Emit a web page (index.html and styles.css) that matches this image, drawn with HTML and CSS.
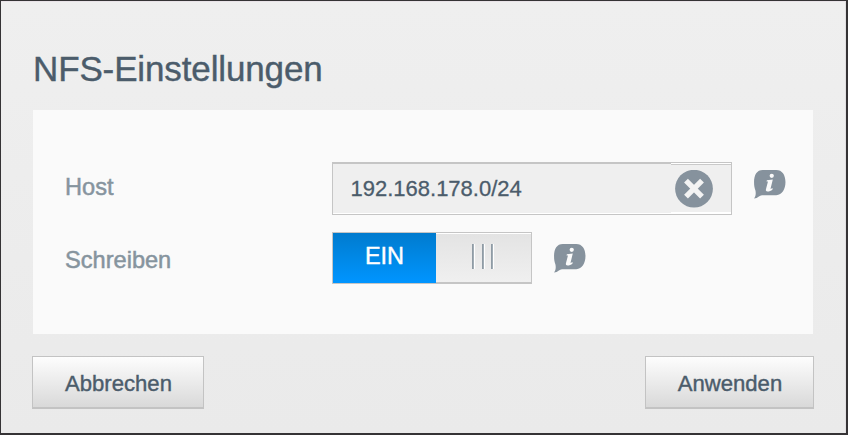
FILE: index.html
```html
<!DOCTYPE html>
<html lang="de">
<head>
<meta charset="utf-8">
<title>NFS-Einstellungen</title>
<link rel="stylesheet" href="styles.css">
</head>
<body>
<svg class="defs" width="0" height="0">
  <symbol id="info" viewBox="0 0 33 30">
    <path fill="#86929d" d="M9 0H23C29 0 32.500 5 32.500 12.500S29 26 23 26H10C7.500 26 6.500 26.300 5 27.500C3.500 28.800 2 29.500 0 29.500C1.800 27 2 24.500 1.500 21.500C.4 18.500 0 16 0 12.500C0 5 3 0 9 0Z"/>
    <circle cx="18.300" cy="6" r="2.200" fill="#fafafa"/>
    <path fill="#fafafa" d="M13.300 10.500L19.400 9.700L17 19.600L19.200 18.500L19 20.500C17.500 21.800 15.700 22.300 14 22.300C12.300 22.300 12 21.300 12.300 20L14.400 12L12.900 12Z"/>
  </symbol>
</svg>
<main class="dialog">
  <h1 class="title">NFS-Einstellungen</h1>
  <section class="panel">
    <div class="row host-row">
      <label class="label">Host</label>
      <div class="field">
        <span class="value">192.168.178.0/24</span>
        <span class="clear-cell">
          <svg class="clear" viewBox="0 0 38 38"><circle cx="19" cy="18.700" r="18.900" fill="#86929d"/><path d="M11 10.700L27 26.700M27 10.700L11 26.700" stroke="#f3f3f3" stroke-width="5.400"/></svg>
        </span>
      </div>
      <svg class="info"><use href="#info"/></svg>
    </div>
    <div class="row write-row">
      <label class="label">Schreiben</label>
      <div class="toggle">
        <span class="on">EIN</span>
        <span class="handle"><i></i><i></i><i></i></span>
      </div>
      <svg class="info"><use href="#info"/></svg>
    </div>
  </section>
  <footer class="actions">
    <button class="button cancel">Abbrechen</button>
    <button class="button apply">Anwenden</button>
  </footer>
</main>
</body>
</html>
```

FILE: styles.css
```css
* { box-sizing: border-box; }
body {
  margin: 0;
  font-family: "Liberation Sans", Arial, sans-serif;
  color: #4b5c6b;
}
.defs { display: block; }
.dialog {
  height: 435px;
  border: 1px solid #353335;
  border-width: 1px 2px 2px 1px;
  padding: 48px 32px 0 31px;
  background: linear-gradient(#efefef, #eaeaea);
  box-shadow: inset 0 1px #e9e3e8, inset -1px 0 #e1dfe1;
}
.title {
  margin: 0 0 0 1px;
  height: 61px;
  font-size: 35px;
  letter-spacing: -.13px;
  line-height: 40px;
  font-weight: 400;
  -webkit-text-stroke: .4px;
}
.panel {
  width: 780px;
  height: 224px;
  margin-left: 1px;
  padding: 52px 0 0 32px;
  background: #fafafa;
}
.row { display: flex; align-items: flex-start; }
.write-row { margin-top: 17px; }
.label {
  width: 267px;
  font-size: 23.600px;
  line-height: 50px;
  color: #86949e;
  -webkit-text-stroke: .5px;
}
.write-row .label { line-height: 56px; height: 52px; }
.field {
  display: flex;
  width: 400px;
  height: 53px;
  border: 1px solid #c5c5c5;
  background: #efefef;
  box-shadow: inset 0 -1px #fff;
}
.value {
  flex: 1;
  padding-left: 17.500px;
  font-size: 22px;
  line-height: 51px;
  box-shadow: inset 0 1px #c5c5c5;
  -webkit-text-stroke: .3px;
}
.clear-cell {
  width: 60px;
  padding: 7px 0 0 4px;
  box-shadow: inset 0 1px #fff, inset 0 2px #c9c9c9, inset 0 -2px #fff;
}
.clear { display: block; width: 38px; height: 38px; }
.info { width: 32px; height: 29px; margin: 8px 0 0 22px; }
.write-row .info { margin-top: 12px; }
.toggle {
  display: flex;
  width: 200px;
  height: 52px;
  border: 1px solid #c5c5c5;
}
.on {
  width: 103px;
  background: linear-gradient(#007bce, #0095ff);
  color: #fff;
  font-size: 23.500px;
  line-height: 46px;
  text-align: center;
  -webkit-text-stroke: .4px;
}
.handle {
  flex: 1;
  display: flex;
  gap: 7px;
  padding: 11px 0 0 36px;
  background: linear-gradient(#e3e3e3, #f0f0f0);
  box-shadow: inset 0 1px #fff, inset 0 -1px #c5c5c5;
}
.handle i {
  width: 3px;
  height: 25px;
  background: linear-gradient(90deg, #8f9ba5 0 1px, #a2adb5 1px 2px, #fff 2px);
}
.handle i:not(:last-child) { margin-right: -.5px; }
.actions {
  display: flex;
  justify-content: space-between;
  width: 782px;
  margin-top: 22px;
}
.button {
  height: 53px;
  padding: 4px 0 0 1px;
  border: 1px solid #c3c3c3;
  border-bottom-width: 2px;
  background: linear-gradient(#fdfdfd, #d9d9d9);
  font: 22.100px "Liberation Sans", Arial, sans-serif;
  color: #4b5c6b;
  -webkit-text-stroke: .4px;
}
.cancel { width: 172px; }
.apply { width: 169px; }
```
